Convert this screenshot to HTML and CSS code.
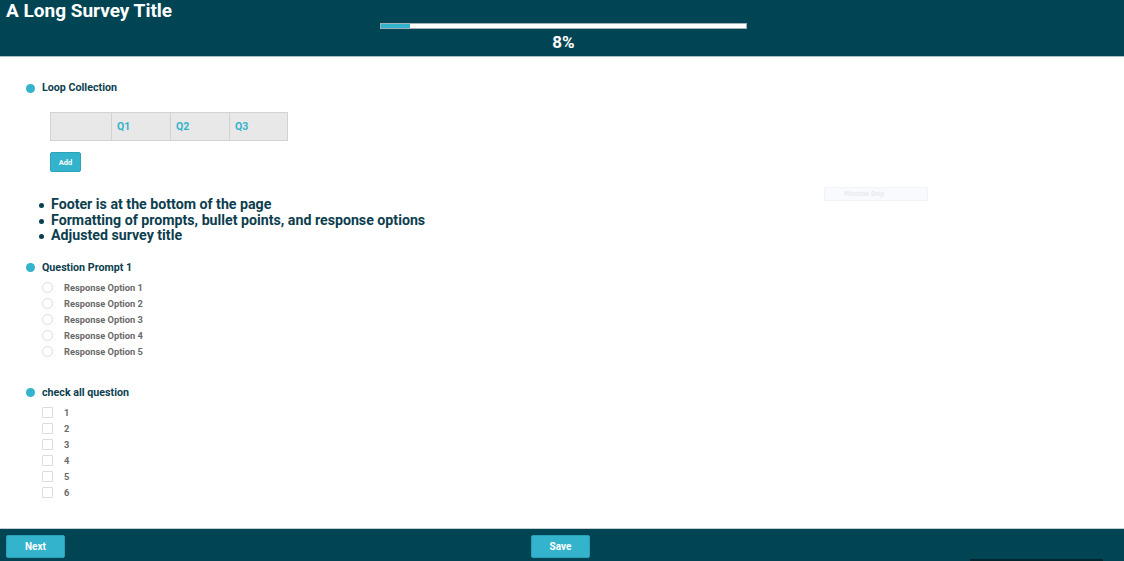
FILE: index.html
```html
<!DOCTYPE html>
<html>
<head>
<meta charset="utf-8">
<link rel="stylesheet" href="styles.css">
</head>
<body>
<div class="page">
  <header class="header">
    <div class="title">A Long Survey Title</div>
    <div class="progress-wrap">
      <div class="progress"><div class="progress-fill" style="width:8%"></div></div>
      <div class="percent">8%</div>
    </div>
  </header>

  <main class="content">
    <section class="question q-loop">
      <div class="prompt"><span class="dot"></span>Loop Collection</div>
      <div class="loop-table">
        <div class="cell"></div>
        <div class="cell">Q1</div>
        <div class="cell">Q2</div>
        <div class="cell">Q3</div>
      </div>
      <button class="add-btn">Add</button>
    </section>

    <ul class="notes">
      <li>Footer is at the bottom of the page</li>
      <li>Formatting of prompts, bullet points, and response options</li>
      <li>Adjusted survey title</li>
    </ul>

    <section class="question q-radio">
      <div class="prompt"><span class="dot"></span>Question Prompt 1</div>
      <div class="options">
        <label class="option"><span class="radio"></span>Response Option 1</label>
        <label class="option"><span class="radio"></span>Response Option 2</label>
        <label class="option"><span class="radio"></span>Response Option 3</label>
        <label class="option"><span class="radio"></span>Response Option 4</label>
        <label class="option"><span class="radio"></span>Response Option 5</label>
      </div>
    </section>

    <section class="question q-check">
      <div class="prompt"><span class="dot"></span>check all question</div>
      <div class="options">
        <label class="option"><span class="check"></span>1</label>
        <label class="option"><span class="check"></span>2</label>
        <label class="option"><span class="check"></span>3</label>
        <label class="option"><span class="check"></span>4</label>
        <label class="option"><span class="check"></span>5</label>
        <label class="option"><span class="check"></span>6</label>
      </div>
    </section>

    <div class="snip">Window Snip</div>
  </main>

  <footer class="footer">
    <button class="foot-btn">Next</button>
    <button class="foot-btn save">Save</button>
    <div class="foot-bar"></div>
  </footer>
</div>
</body>
</html>
```

FILE: styles.css
```css
* { box-sizing: border-box; }
html, body {
  margin: 0;
  padding: 0;
  background: #ffffff;
  font-family: Roboto, "Liberation Sans", Arial, sans-serif;
}
.page {
  position: relative;
  width: 1124px;
  height: 561px;
  display: flex;
  flex-direction: column;
  overflow: hidden;
}
.header {
  height: 57px;
  background: #014555;
  border-bottom: 1px solid #a9c0c8;
  padding: 0 6px;
  flex: none;
}
.title {
  color: #ffffff;
  font-weight: 700;
  font-size: 19px;
  line-height: 21px;
}
.progress-wrap {
  width: 367px;
  margin: 2px 0 0 374px;
  display: flex;
  flex-direction: column;
  align-items: center;
}
.progress {
  width: 367px;
  height: 6px;
  background: #ffffff;
  border: 1px solid #9fb1b8;
  display: flex;
}
.progress-fill {
  background: #33b3cc;
  height: 100%;
}
.percent {
  color: #ffffff;
  font-weight: 700;
  font-size: 17px;
  line-height: 20px;
  margin-top: 3px;
}
.content {
  position: relative;
  flex: 1;
  padding: 25px 0 0 26px;
}
.prompt {
  display: flex;
  align-items: center;
  color: #0c3e4e;
  font-weight: 700;
  font-size: 10.7px;
  line-height: 12px;
}
.dot {
  width: 9px;
  height: 9px;
  border-radius: 50%;
  background: #33b3cc;
  margin-right: 7px;
}
.loop-table {
  margin: 18px 0 0 24px;
  display: grid;
  grid-template-columns: 60px 59px 59px 60px;
  width: 238px;
  height: 29px;
  background: #e8e8e8;
  border: 1px solid #d2d2d2;
}
.cell {
  border-left: 1px solid #d2d2d2;
  color: #33b3cc;
  font-weight: 700;
  font-size: 10.5px;
  display: flex;
  align-items: center;
  padding-left: 5px;
}
.cell:first-child { border-left: none; }
.add-btn {
  display: block;
  margin: 11px 0 0 24px;
  width: 31px;
  height: 20px;
  border: 1px solid #2aa3bb;
  border-radius: 2px;
  background: #33b3cc;
  color: #ffffff;
  font-family: Roboto, "Liberation Sans", Arial, sans-serif;
  font-weight: 700;
  font-size: 7.5px;
  padding: 0;
}
.notes {
  margin: 25px 0 0 0;
  padding-left: 25px;
  list-style: none;
  color: #0c3e4e;
  font-weight: 700;
  font-size: 14.2px;
  line-height: 15.5px;
}
.notes li {
  position: relative;
}
.notes li::before {
  content: "";
  position: absolute;
  left: -12px;
  top: 6px;
  width: 5px;
  height: 5px;
  border-radius: 50%;
  background: #0c3e4e;
}
.q-radio { margin-top: 18px; }
.options {
  margin: 6px 0 0 16px;
  display: flex;
  flex-direction: column;
}
.option {
  display: flex;
  align-items: center;
  height: 16px;
  color: #6a6a6a;
  font-weight: 700;
  font-size: 9.3px;
}
.radio {
  width: 11px;
  height: 11px;
  border-radius: 50%;
  border: 1px solid #dcdcdc;
  margin-right: 11px;
}
.check {
  width: 11px;
  height: 11px;
  border-radius: 1px;
  border: 1px solid #dcdcdc;
  margin-right: 11px;
}
.q-check { margin-top: 27px; }
.snip {
  position: absolute;
  left: 824px;
  top: 130px;
  width: 104px;
  height: 14px;
  background: #f8fafd;
  border: 1px solid #f0f3f8;
  color: #e4e4ec;
  font-size: 7px;
  line-height: 12px;
  padding-left: 19px;
}
.footer {
  position: relative;
  flex: none;
  height: 33px;
  background: #014555;
  border-top: 1px solid #c4cfd3;
  padding-left: 6px;
  display: flex;
  align-items: flex-start;
  padding-top: 6px;
}
.foot-btn {
  width: 59px;
  height: 23px;
  border: 1px solid #2a9fb7;
  border-radius: 2px;
  background: #33b3cc;
  color: #ffffff;
  font-family: Roboto, "Liberation Sans", Arial, sans-serif;
  font-weight: 700;
  font-size: 10px;
  padding: 0;
}
.save { margin-left: 466px; }
.foot-bar {
  position: absolute;
  left: 970px;
  bottom: 0;
  width: 133px;
  height: 2px;
  background: #02262e;
}
```
